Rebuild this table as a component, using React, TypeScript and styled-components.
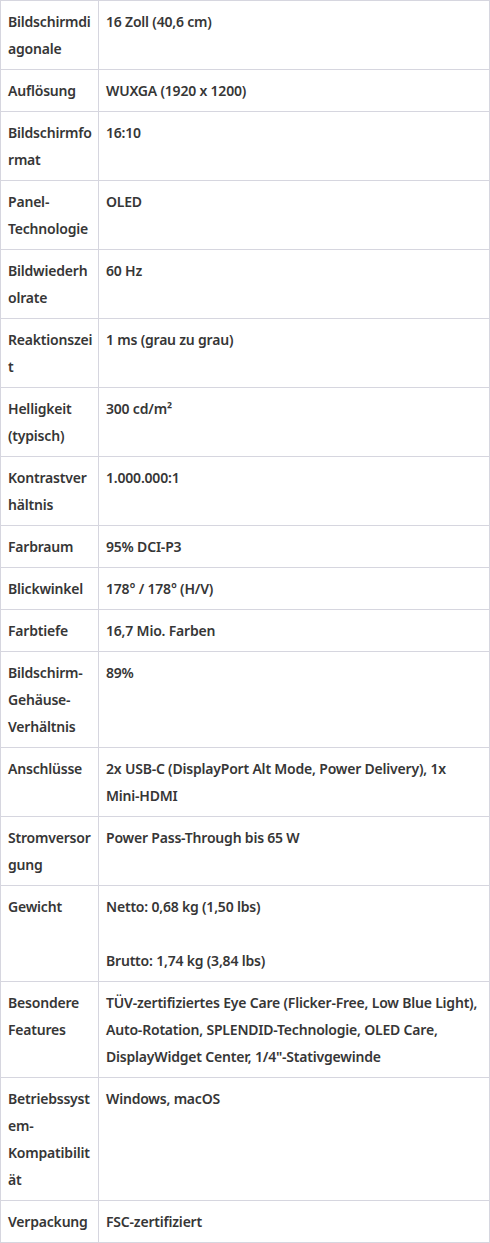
import React from 'react';
import styled, { createGlobalStyle } from 'styled-components';

const GlobalStyle = createGlobalStyle`
  html, body {
    margin: 0;
    padding: 0;
    background: #ffffff;
  }
`;

// label lines are split where the narrow first column wraps them
const specs: { label: string[]; value: React.ReactNode }[] = [
  { label: ['Bildschirmdi', 'agonale'], value: '16 Zoll (40,6 cm)' },
  { label: ['Auflösung'], value: 'WUXGA (1920 x 1200)' },
  { label: ['Bildschirmfo', 'rmat'], value: '16:10' },
  { label: ['Panel-', 'Technologie'], value: 'OLED' },
  { label: ['Bildwiederh', 'olrate'], value: '60 Hz' },
  { label: ['Reaktionszei', 't'], value: '1 ms (grau zu grau)' },
  { label: ['Helligkeit', '(typisch)'], value: '300 cd/m²' },
  { label: ['Kontrastver', 'hältnis'], value: '1.000.000:1' },
  { label: ['Farbraum'], value: '95% DCI-P3' },
  { label: ['Blickwinkel'], value: '178° / 178° (H/V)' },
  { label: ['Farbtiefe'], value: '16,7 Mio. Farben' },
  { label: ['Bildschirm-', 'Gehäuse-', 'Verhältnis'], value: '89%' },
  { label: ['Anschlüsse'], value: '2x USB-C (DisplayPort Alt Mode, Power Delivery), 1x Mini-HDMI' },
  { label: ['Stromversor', 'gung'], value: 'Power Pass-Through bis 65 W' },
  {
    label: ['Gewicht'],
    value: (
      <>
        Netto: 0,68 kg (1,50 lbs)
        <br />
        <br />
        Brutto: 1,74 kg (3,84 lbs)
      </>
    ),
  },
  {
    label: ['Besondere', 'Features'],
    value: 'TÜV-zertifiziertes Eye Care (Flicker-Free, Low Blue Light), Auto-Rotation, SPLENDID-Technologie, OLED Care, DisplayWidget Center, 1/4"-Stativgewinde',
  },
  { label: ['Betriebssyst', 'em-', 'Kompatibilit', 'ät'], value: 'Windows, macOS' },
  { label: ['Verpackung'], value: 'FSC-zertifiziert' },
];

const SpecTable = styled.table`
  width: 490px;
  border-collapse: collapse;
  table-layout: fixed;
  font-family: 'Noto Sans', 'Open Sans', sans-serif;
  font-size: 14px;
  font-weight: 600;
  line-height: 27px;
  letter-spacing: -0.2px;
  color: #363636;
`;

const Cell = styled.td<{ $label?: boolean }>`
  width: ${(p) => (p.$label ? '83px' : 'auto')};
  padding: 7px;
  border: 1px solid #d6d6df;
  vertical-align: top;
  white-space: ${(p) => (p.$label ? 'nowrap' : 'normal')};
`;

const App: React.FC = () => {
  return (
    <>
      <GlobalStyle />
      <SpecTable>
        <tbody>
          {specs.map((row) => (
            <tr key={row.label.join('')}>
              <Cell $label>
                {row.label.map((line, i) => (
                  <React.Fragment key={i}>
                    {i > 0 && <br />}
                    {line}
                  </React.Fragment>
                ))}
              </Cell>
              <Cell>{row.value}</Cell>
            </tr>
          ))}
        </tbody>
      </SpecTable>
    </>
  );
};

export default App;
